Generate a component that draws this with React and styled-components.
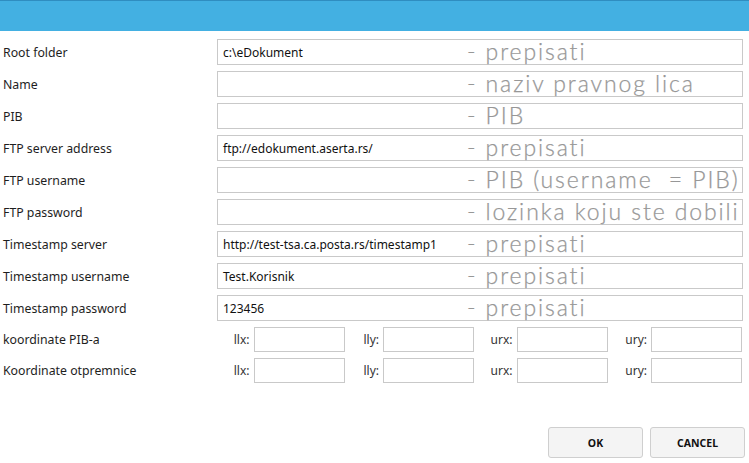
import React from "react";
import styled, { createGlobalStyle } from "styled-components";

const Global = createGlobalStyle`
  html, body { margin: 0; padding: 0; background: #fff; }
  body { font-family: "Noto Sans", "Liberation Sans", sans-serif; font-size: 12px; color: #1e1e1e; }
  * { box-sizing: border-box; }
`;

const Page = styled.div`
  width: 749px;
  height: 463px;
  display: flex;
  flex-direction: column;
  overflow: hidden;
`;

const Header = styled.div`
  height: 31px;
  flex: none;
  background: #43b0e2;
  border-top: 1px solid #2f8dc0;
`;

const Form = styled.div`
  display: flex;
  flex-direction: column;
  gap: 6px;
  padding: 8px 6px 0 3px;
`;

const Row = styled.div`
  display: grid;
  grid-template-columns: 214px 1fr;
  align-items: center;
  height: ${(p) => (p.$short ? 25 : 26)}px;
`;

const Label = styled.div`
  font-size: 12.3px;
  color: #1e1e1e;
  white-space: nowrap;
`;

const Field = styled.div`
  height: 26px;
  border: 1px solid #c9c9c9;
  display: grid;
  grid-template-columns: 244px 1fr;
  align-items: center;
  padding-left: 5px;
  background: #fff;
`;

const Value = styled.span`
  font-size: 12px;
  color: #111;
  white-space: nowrap;
`;

const Hint = styled.span`
  font-family: Lato, "Noto Sans", sans-serif;
  font-weight: 300;
  font-size: 23px;
  line-height: 24px;
  color: #979797;
  white-space: nowrap;
  letter-spacing: 1.9px;
  -webkit-text-stroke: 0.25px #979797;
  position: relative;
  top: -1px;
`;

const Coords = styled.div`
  display: grid;
  grid-template-columns: repeat(4, 1fr);
  height: 25px;
`;

const CoordGroup = styled.div`
  display: flex;
  align-items: center;
  justify-content: flex-end;
  gap: 4px;
  padding-right: ${(p) => p.$pr}px;
`;

const CoordLabel = styled.span`
  font-size: 12px;
  color: #333;
`;

const SmallBox = styled.div`
  width: 91px;
  height: 25px;
  border: 1px solid #c9c9c9;
  background: #fff;
`;

const Footer = styled.div`
  display: flex;
  justify-content: flex-end;
  gap: 7px;
  padding: 44px 4px 0 0;
`;

const Button = styled.button`
  width: 95px;
  height: 31px;
  background: #f4f4f4;
  border: 1px solid #cfcfcf;
  border-radius: 3px;
  font-family: "Noto Sans", "Liberation Sans", sans-serif;
  font-weight: 700;
  font-size: 10.5px;
  color: #111;
  padding: 0;
`;

const rows = [
  ["Root folder", "c:\\eDokument", "- prepisati"],
  ["Name", "", "- naziv pravnog lica"],
  ["PIB", "", "- PIB"],
  ["FTP server address", "ftp://edokument.aserta.rs/", "- prepisati"],
  ["FTP username", "", "- PIB (username  = PIB)"],
  ["FTP password", "", "- lozinka koju ste dobili"],
  ["Timestamp server", "http://test-tsa.ca.posta.rs/timestamp1", "- prepisati"],
  ["Timestamp username", "Test.Korisnik", "- prepisati"],
  ["Timestamp password", "123456", "- prepisati"],
];

const coordGroups = [
  ["llx:", 4],
  ["lly:", 6],
  ["urx:", 4],
  ["ury:", 1],
];

function CoordRow({ label }) {
  return (
    <Row $short>
      <Label>{label}</Label>
      <Coords>
        {coordGroups.map(([l, pr]) => (
          <CoordGroup key={l} $pr={pr}>
            <CoordLabel>{l}</CoordLabel>
            <SmallBox />
          </CoordGroup>
        ))}
      </Coords>
    </Row>
  );
}

export default function App() {
  return (
    <Page>
      <Global />
      <Header />
      <Form>
        {rows.map(([label, value, hint]) => (
          <Row key={label}>
            <Label>{label}</Label>
            <Field>
              <Value>{value}</Value>
              <Hint>{hint.replace(/ /g, "\u00a0")}</Hint>
            </Field>
          </Row>
        ))}
        <CoordRow label="koordinate PIB-a" />
        <CoordRow label="Koordinate otpremnice" />
      </Form>
      <Footer>
        <Button>OK</Button>
        <Button>CANCEL</Button>
      </Footer>
    </Page>
  );
}
